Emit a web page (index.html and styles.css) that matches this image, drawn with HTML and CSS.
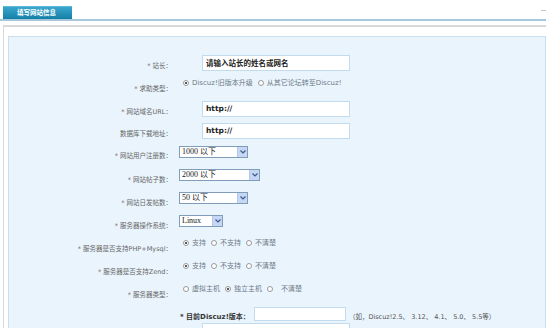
FILE: index.html
```html
<!DOCTYPE html>
<html lang="zh-CN">
<head>
  <meta charset="UTF-8" />
  <title>填写网站信息</title>
  <link rel="stylesheet" href="styles.css">
</head>
<body>
  <div class="tabbar">
    <span class="tab">填写网站信息</span>
    <span class="corner"></span>
  </div>

  <div class="panel">
    <div class="box">
      <!-- 基本信息 -->
      <div class="row">
        <div class="label">* 站长：</div>
        <div class="ctrl"><input class="text" type="text" value="请输入站长的姓名或网名"></div>
      </div>
      <div class="row">
        <div class="label">* 求助类型：</div>
        <div class="ctrl radios">
          <span class="opt"><i class="radio on"></i>Discuz!旧版本升级</span>
          <span class="opt"><i class="radio"></i>从其它论坛转至Discuz!</span>
        </div>
      </div>
      <div class="row">
        <div class="label">* 网站域名URL：</div>
        <div class="ctrl"><input class="text" type="text" value="http://"></div>
      </div>
      <div class="row short">
        <div class="label">数据库下载地址：</div>
        <div class="ctrl"><input class="text" type="text" value="http://"></div>
      </div>

      <!-- 网站规模 -->
      <div class="row tall">
        <div class="label">* 网站用户注册数：</div>
        <div class="ctrl">
          <div class="select s-mid"><span class="val">1000 以下</span><span class="arrow"><svg width="6" height="4" viewBox="0 0 6 4"><path d="M0.5 0.5 L3 3 L5.5 0.5" fill="none" stroke="#3d5a8a" stroke-width="1.2"/></svg></span></div>
        </div>
      </div>
      <div class="row">
        <div class="label">* 网站帖子数：</div>
        <div class="ctrl">
          <div class="select s-wide"><span class="val">2000 以下</span><span class="arrow"><svg width="6" height="4" viewBox="0 0 6 4"><path d="M0.5 0.5 L3 3 L5.5 0.5" fill="none" stroke="#3d5a8a" stroke-width="1.2"/></svg></span></div>
        </div>
      </div>
      <div class="row">
        <div class="label">* 网站日发帖数：</div>
        <div class="ctrl">
          <div class="select s-mid"><span class="val">50 以下</span><span class="arrow"><svg width="6" height="4" viewBox="0 0 6 4"><path d="M0.5 0.5 L3 3 L5.5 0.5" fill="none" stroke="#3d5a8a" stroke-width="1.2"/></svg></span></div>
        </div>
      </div>
      <div class="row">
        <div class="label">* 服务器操作系统：</div>
        <div class="ctrl">
          <div class="select s-small"><span class="val">Linux</span><span class="arrow"><svg width="6" height="4" viewBox="0 0 6 4"><path d="M0.5 0.5 L3 3 L5.5 0.5" fill="none" stroke="#3d5a8a" stroke-width="1.2"/></svg></span></div>
        </div>
      </div>

      <!-- 服务器环境 -->
      <div class="row">
        <div class="label">* 服务器是否支持PHP+Mysql：</div>
        <div class="ctrl radios">
          <span class="opt"><i class="radio on"></i>支持</span>
          <span class="opt"><i class="radio"></i>不支持</span>
          <span class="opt"><i class="radio"></i>不清楚</span>
        </div>
      </div>
      <div class="row">
        <div class="label">* 服务器是否支持Zend：</div>
        <div class="ctrl radios">
          <span class="opt"><i class="radio on"></i>支持</span>
          <span class="opt"><i class="radio"></i>不支持</span>
          <span class="opt"><i class="radio"></i>不清楚</span>
        </div>
      </div>
      <div class="row">
        <div class="label">* 服务器类型：</div>
        <div class="ctrl radios">
          <span class="opt"><i class="radio"></i>虚拟主机</span>
          <span class="opt"><i class="radio on"></i>独立主机</span>
          <span class="opt gap"><i class="radio"></i>不清楚</span>
        </div>
      </div>

      <!-- 版本 -->
      <div class="row version">
        <div class="label"></div>
        <div class="ctrl">
          <span class="vlabel">* 目前Discuz!版本：</span>
          <input class="text vinput" type="text" value="">
          <span class="hint">（如，Discuz!2.5、 3.12、 4.1、 5.0、 5.5等）</span>
        </div>
      </div>
      <div class="row last">
        <div class="label"></div>
        <div class="ctrl"><input class="text" type="text" value=""></div>
      </div>
    </div>
  </div>
</body>
</html>
```

FILE: styles.css
```css
:root {
  --tab-color: #1a8cb3;
  --line-blue: #a7c8dc;
  --box-bg: #eaf4fd;
  --box-border: #c9def1;
  --label: #666;
}

* {
  box-sizing: border-box;
}

body {
  margin: 0;
  height: 328px;
  overflow: hidden;
  background: #fff;
  font-family: "DejaVu Sans", "Noto Sans CJK SC", sans-serif;
  color: var(--label);
}

/* Tab bar */
.tabbar {
  display: flex;
  align-items: flex-start;
  height: 21px;
  padding: 6px 0 0 3px;
  border-bottom: 2px solid var(--line-blue);
}

.tab {
  width: 69px;
  height: 13px;
  padding-left: 14px;
  background: linear-gradient(#3aa6cc, #137fa7);
  border-top: 1px solid #5cb8d6;
  color: #fff;
  font-size: 6.5px;
  font-weight: bold;
  line-height: 12px;
}

.corner {
  margin: 4px 0 0 auto;
  width: 5px;
  height: 1px;
  background: #c4c4c4;
}

/* Panel */
.panel {
  margin: 4px -6px 0 3px;
  border: 1px solid #d9d9d9;
  border-top-width: 2px;
  border-bottom: none;
  padding: 9px 5px 0 4px;
}

.box {
  background: var(--box-bg);
  border: 1px solid var(--box-border);
  border-bottom: none;
  padding-top: 15px;
  height: 292px;
  overflow: hidden;
}

/* Rows */
.row {
  display: flex;
  align-items: center;
  height: 23px;
}

.row.short {
  height: 21px;
}

.row.tall {
  height: 24px;
}

.row.version {
  height: 19px;
}

.row.last {
  align-items: flex-start;
}

.label {
  width: 163px;
  padding-top: 4px;
  text-align: right;
  font-size: 6.5px;
  line-height: 10px;
  white-space: nowrap;
}

.ctrl {
  display: flex;
  align-items: center;
}

/* Text inputs */
.text {
  margin: 0 0 2px 30px;
  width: 148px;
  height: 16px;
  padding: 0 3px;
  border: 1px solid #c3dbee;
  background: #fff;
  color: #222;
  font-family: "DejaVu Sans", "Noto Sans CJK SC", sans-serif;
  font-size: 7.5px;
  font-weight: bold;
  outline: none;
}

.row.last .text {
  margin-bottom: 0;
}

/* Radio groups */
.radios {
  margin: 0 0 7px 11px;
  font-size: 7px;
  color: #6c7a88;
  line-height: 10px;
}

.opt {
  display: inline-flex;
  align-items: center;
  margin-right: 5px;
  white-space: nowrap;
}

.opt.gap .radio {
  margin-right: 8px;
}

.radio {
  position: relative;
  display: inline-block;
  width: 6px;
  height: 6px;
  margin-right: 3px;
  border: 1px solid #9a9a9a;
  border-radius: 50%;
  background: #fff;
}

.radio.on::after {
  content: "";
  position: absolute;
  left: 1px;
  top: 1px;
  width: 2px;
  height: 2px;
  border-radius: 50%;
  background: #222;
}

/* Selects */
.select {
  display: flex;
  align-items: center;
  justify-content: space-between;
  height: 12px;
  margin: 0 0 5px 7px;
  border: 1px solid #7f9db9;
  background: #fff;
  font-family: "Liberation Serif", "Noto Sans CJK SC", serif;
  font-size: 8px;
  color: #222;
}

.s-mid { width: 69px; }
.s-wide { width: 81px; }
.s-small { width: 44px; }

.val {
  padding-left: 2px;
  line-height: 10px;
  white-space: nowrap;
}

.arrow {
  display: flex;
  align-items: center;
  justify-content: center;
  width: 10px;
  height: 10px;
  background: #c6d7f6;
  border-left: 1px solid #b4c8ea;
}

/* Version row */
.vlabel {
  margin-left: 8px;
  padding-top: 4px;
  font-size: 7px;
  font-weight: bold;
  color: #333;
  white-space: nowrap;
}

.vinput {
  margin: 0 3px 0 4px;
  width: 92px;
  height: 14px;
}

.hint {
  padding-top: 4px;
  font-size: 6.5px;
  color: #555;
  white-space: nowrap;
}
```
